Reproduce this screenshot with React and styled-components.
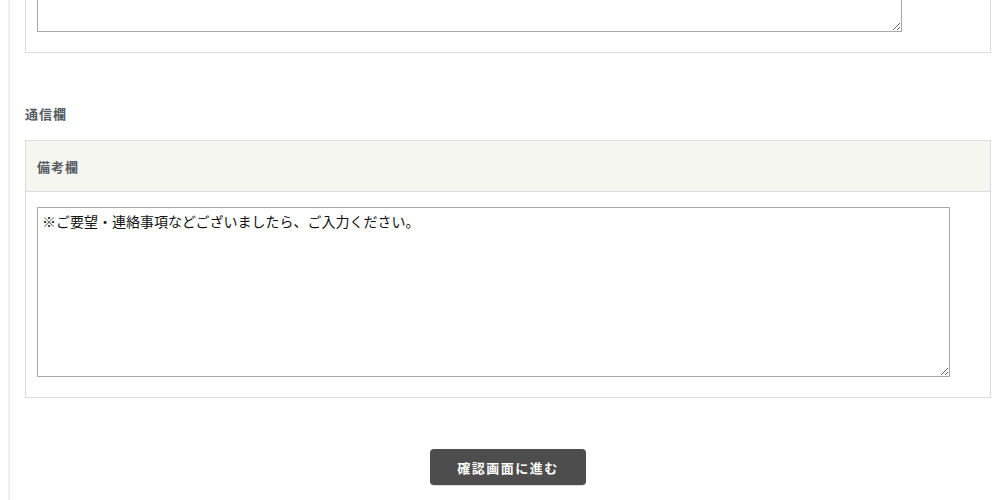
import React from "react";
import styled, { createGlobalStyle } from "styled-components";

const GlobalStyle = createGlobalStyle`
  html, body {
    margin: 0;
    padding: 0;
    background: #fff;
    overflow: hidden;
  }
  body {
    font-family: "Noto Sans CJK JP", "Noto Sans", sans-serif;
    color: #333;
  }
`;

export default function App() {
  return (
    <>
      <GlobalStyle />
      <Page>
        <Main>
          <Box>
            <Body>
              <Field $width="865px" $height="140px" defaultValue="" />
            </Body>
          </Box>

          <SectionTitle>通信欄</SectionTitle>

          <Box>
            <BoxHead>備考欄</BoxHead>
            <Body>
              <Field
                $width="913px"
                $height="170px"
                defaultValue="※ご要望・連絡事項などございましたら、ご入力ください。"
              />
            </Body>
          </Box>

          <Actions>
            <SubmitButton type="button">確認画面に進む</SubmitButton>
          </Actions>
        </Main>
      </Page>
    </>
  );
}

/* ---------------- styled-components ---------------- */

const BORDER = "#dcdcdc";
const HEAD_BG = "#f6f6f0";
const LABEL = "#555b63";

const Page = styled.div`
  padding: 0 9px 0 8px;
  margin-top: -124px;
`;

const Main = styled.main`
  border-left: 2px solid #f0f0f0;
  padding: 0 0 40px 15px;
`;

const Box = styled.section`
  border: 1px solid ${BORDER};
  background: #fff;
`;

const BoxHead = styled.div`
  height: 50px;
  display: flex;
  align-items: center;
  padding: 0 11px;
  background: ${HEAD_BG};
  border-bottom: 1px solid ${BORDER};
  font-size: 13px;
  font-weight: 700;
  letter-spacing: 1px;
  color: ${LABEL};
`;

const Body = styled.div`
  padding: 15px 11px 20px;
`;

const Field = styled.textarea`
  display: block;
  box-sizing: border-box;
  width: ${(p) => p.$width};
  height: ${(p) => p.$height};
  margin: 0;
  padding: 5px 4px;
  border: 1px solid #a9a9a9;
  border-radius: 0;
  font-family: "Noto Sans CJK JP", "Noto Sans", sans-serif;
  font-size: 14px;
  line-height: 1.15;
  color: #111;
  background: #fff;
  outline: none;
`;

const SectionTitle = styled.h3`
  margin: 0;
  padding: 52px 0 17px;
  font-size: 13px;
  line-height: 18px;
  font-weight: 700;
  letter-spacing: 1px;
  color: ${LABEL};
`;

const Actions = styled.div`
  display: flex;
  justify-content: center;
  padding-top: 51px;
`;

const SubmitButton = styled.button`
  width: 156px;
  height: 36px;
  border: none;
  border-radius: 4px;
  background: #4d4d4d;
  color: #fff;
  font-family: "Noto Sans CJK JP", "Noto Sans", sans-serif;
  font-size: 13px;
  font-weight: 700;
  letter-spacing: 1.5px;
  cursor: pointer;
  box-shadow: 0 1px 1px rgba(0, 0, 0, 0.15);

  &:hover {
    background: #333;
  }
`;
